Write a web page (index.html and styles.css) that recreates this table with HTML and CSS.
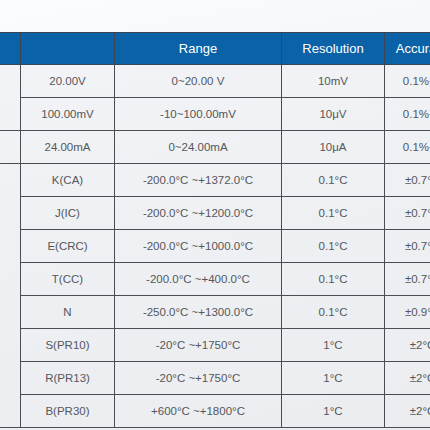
FILE: index.html
```html
<!DOCTYPE html>
<html>
<head>
<meta charset="utf-8">
<link rel="stylesheet" href="styles.css">
</head>
<body>
<div class="page">
<table class="spec">
  <colgroup>
    <col class="c0"><col class="c1"><col class="c2"><col class="c3"><col class="c4">
  </colgroup>
  <thead>
    <tr><th></th><th></th><th>Range</th><th>Resolution</th><th>Accuracy</th></tr>
  </thead>
  <tbody>
    <tr><td rowspan="2" class="grp"></td><td>20.00V</td><td>0~20.00 V</td><td>10mV</td><td>0.1%+2</td></tr>
    <tr><td>100.00mV</td><td>-10~100.00mV</td><td>10μV</td><td>0.1%+2</td></tr>
    <tr><td class="grp"></td><td>24.00mA</td><td>0~24.00mA</td><td>10μA</td><td>0.1%+2</td></tr>
    <tr><td rowspan="8" class="grp"></td><td>K(CA)</td><td>-200.0°C ~+1372.0°C</td><td>0.1°C</td><td>±0.7°C</td></tr>
    <tr><td>J(IC)</td><td>-200.0°C ~+1200.0°C</td><td>0.1°C</td><td>±0.7°C</td></tr>
    <tr><td>E(CRC)</td><td>-200.0°C ~+1000.0°C</td><td>0.1°C</td><td>±0.7°C</td></tr>
    <tr><td>T(CC)</td><td>-200.0°C ~+400.0°C</td><td>0.1°C</td><td>±0.7°C</td></tr>
    <tr><td>N</td><td>-250.0°C ~+1300.0°C</td><td>0.1°C</td><td>±0.9°C</td></tr>
    <tr><td>S(PR10)</td><td>-20°C ~+1750°C</td><td>1°C</td><td>±2°C</td></tr>
    <tr><td>R(PR13)</td><td>-20°C ~+1750°C</td><td>1°C</td><td>±2°C</td></tr>
    <tr><td>B(PR30)</td><td>+600°C ~+1800°C</td><td>1°C</td><td>±2°C</td></tr>
  </tbody>
</table>
</div>
</body>
</html>
```

FILE: styles.css
```css
html, body {
  margin: 0;
  padding: 0;
  width: 430px;
  height: 430px;
  overflow: hidden;
}
body {
  background: linear-gradient(170deg, #fbfcfd 0%, #f1f3f6 40%, #e8ebef 100%);
  font-family: "Liberation Sans", Arial, sans-serif;
}
.page {
  padding-top: 32px;
  margin-left: -60px;
}
.spec {
  border-collapse: collapse;
  table-layout: fixed;
  width: 520px;
  background: rgba(236, 239, 243, 0.55);
}
.c0 { width: 80px; }
.c1 { width: 94px; }
.c2 { width: 167px; }
.c3 { width: 103px; }
.c4 { width: 76px; }
.spec th, .spec td {
  border: 1px solid #4a4d52;
  text-align: center;
  padding: 0;
  white-space: nowrap;
  overflow: hidden;
}
.spec th {
  background: #0b62a7;
  color: #ffffff;
  font-weight: normal;
  font-size: 13px;
  height: 31px;
  border-color: #3a4654;
}
.spec td {
  height: 32px;
  font-size: 11.5px;
  color: #54575b;
}
```
